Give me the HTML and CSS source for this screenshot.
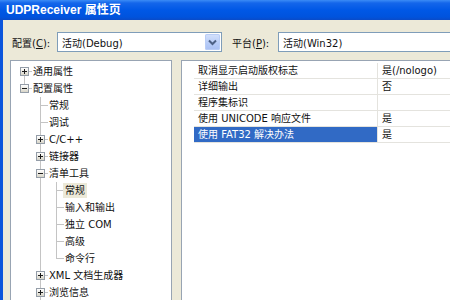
FILE: index.html
```html
<!DOCTYPE html>
<html lang="zh-CN">
<head>
    <meta charset="UTF-8">
    <title>UDPReceiver 属性页</title>
    <link rel="stylesheet" href="styles.css">
</head>
<body>
    <div class="titlebar">UDPReceiver 属性页</div>
    <div class="frame">
        <div class="config">
            <span class="label">配置(<u>C</u>):</span>
            <div class="combo">
                <span class="value">活动(Debug)</span>
                <span class="drop">
                    <svg width="15" height="16" viewBox="0 0 15 16">
                        <path d="M4 6.5 L7.5 10 L11 6.5" fill="none" stroke="#4d6185" stroke-width="2"/>
                    </svg>
                </span>
            </div>
            <span class="label label-platform">平台(<u>P</u>):</span>
            <div class="combo combo-wide">
                <span class="value">活动(Win32)</span>
            </div>
        </div>

        <div class="panes">
            <div class="tree">
                <div class="trow"><span class="cell head"><i class="box plus"></i></span><span class="tlabel">通用属性</span></div>
                <div class="trow"><span class="cell end"><i class="box"></i></span><span class="tlabel">配置属性</span></div>
                <div class="trow"><span class="cell"></span><span class="cell tee"></span><span class="tlabel">常规</span></div>
                <div class="trow"><span class="cell"></span><span class="cell tee"></span><span class="tlabel">调试</span></div>
                <div class="trow"><span class="cell"></span><span class="cell tee"><i class="box plus"></i></span><span class="tlabel">C/C++</span></div>
                <div class="trow"><span class="cell"></span><span class="cell tee"><i class="box plus"></i></span><span class="tlabel">链接器</span></div>
                <div class="trow"><span class="cell"></span><span class="cell tee"><i class="box"></i></span><span class="tlabel">清单工具</span></div>
                <div class="trow"><span class="cell"></span><span class="cell pass"></span><span class="cell tee"></span><span class="tlabel selected">常规</span></div>
                <div class="trow"><span class="cell"></span><span class="cell pass"></span><span class="cell tee"></span><span class="tlabel">输入和输出</span></div>
                <div class="trow"><span class="cell"></span><span class="cell pass"></span><span class="cell tee"></span><span class="tlabel">独立 COM</span></div>
                <div class="trow"><span class="cell"></span><span class="cell pass"></span><span class="cell tee"></span><span class="tlabel">高级</span></div>
                <div class="trow"><span class="cell"></span><span class="cell pass"></span><span class="cell end"></span><span class="tlabel">命令行</span></div>
                <div class="trow"><span class="cell"></span><span class="cell tee"><i class="box plus"></i></span><span class="tlabel">XML 文档生成器</span></div>
                <div class="trow"><span class="cell"></span><span class="cell tee"><i class="box plus"></i></span><span class="tlabel">浏览信息</span></div>
            </div>

            <div class="grid">
                <div class="gutter"></div>
                <div class="rows">
                    <div class="prow"><span class="pname">取消显示启动版权标志</span><span class="pvalue">是(/nologo)</span></div>
                    <div class="prow"><span class="pname">详细输出</span><span class="pvalue">否</span></div>
                    <div class="prow"><span class="pname">程序集标识</span><span class="pvalue"></span></div>
                    <div class="prow"><span class="pname">使用 UNICODE 响应文件</span><span class="pvalue">是</span></div>
                    <div class="prow selected"><span class="pname">使用 FAT32 解决办法</span><span class="pvalue">是</span></div>
                </div>
            </div>
        </div>
    </div>
</body>
</html>
```

FILE: styles.css
```css
body {
    margin: 0;
    width: 450px;
    height: 300px;
    overflow: hidden;
    background: #ece9d8;
    color: #111;
    font: 10px "DejaVu Sans", "Noto Sans CJK SC", sans-serif;
}

.titlebar {
    height: 20px;
    padding-left: 6px;
    line-height: 21px;
    color: #fff;
    font: bold 12px "Liberation Sans", "Noto Sans CJK SC", sans-serif;
    background: linear-gradient(#3b8cf6 0, #1466ea 3px, #0058e6 50%, #0053dd 85%, #0a4bc8 100%);
}

.frame {
    height: 280px;
    box-sizing: border-box;
    padding: 12px 0 0 7px;
    border-left: 3px solid #0b55dc;
    overflow: hidden;
}

/* configuration / platform row */
.config {
    display: flex;
    align-items: center;
    height: 20px;
}

.label {
    width: 47px;
    padding-left: 2px;
    box-sizing: border-box;
    flex: none;
}

.label-platform {
    width: 46px;
    margin-left: 10px;
    padding-left: 0;
}

.combo {
    width: 165px;
    height: 20px;
    flex: none;
    box-sizing: border-box;
    display: flex;
    align-items: center;
    background: #fff;
    border: 1px solid #7f9db9;
}

.combo-wide {
    width: 220px;
}

.combo .value {
    flex: 1;
    padding-left: 4px;
}

.combo .drop {
    width: 15px;
    height: 16px;
    margin-right: 1px;
    display: flex;
    border-radius: 2px;
    background: linear-gradient(#d6e2fc, #b6cbf7 60%, #a9c0f3);
    box-shadow: inset 0 0 0 1px #b9cdf6;
}

/* two panes */
.panes {
    display: flex;
    gap: 9px;
    margin-top: 8px;
}

.tree {
    width: 162px;
    height: 260px;
    flex: none;
    box-sizing: border-box;
    padding: 2px 0 0 5px;
    background: #fff;
    border: 1px solid #98a4b3;
}

.trow {
    display: flex;
    height: 17px;
    align-items: center;
}

.cell {
    width: 16px;
    height: 17px;
    flex: none;
    box-sizing: border-box;
    padding: 4px 0 0 4px;
    background-repeat: no-repeat;
}

.cell.pass {
    background-image: linear-gradient(#c4c4c4, #c4c4c4);
    background-position: 8px 0;
    background-size: 1px 17px;
}

.cell.tee {
    background-image: linear-gradient(#c4c4c4, #c4c4c4), linear-gradient(#c4c4c4, #c4c4c4);
    background-position: 8px 0, 8px 8px;
    background-size: 1px 17px, 8px 1px;
}

.cell.end {
    background-image: linear-gradient(#c4c4c4, #c4c4c4), linear-gradient(#c4c4c4, #c4c4c4);
    background-position: 8px 0, 8px 8px;
    background-size: 1px 9px, 8px 1px;
}

.cell.head {
    background-image: linear-gradient(#c4c4c4, #c4c4c4), linear-gradient(#c4c4c4, #c4c4c4);
    background-position: 8px 8px, 8px 8px;
    background-size: 1px 9px, 8px 1px;
}

.box {
    display: block;
    width: 9px;
    height: 9px;
    box-sizing: border-box;
    border: 1px solid #949da8;
    background:
        linear-gradient(#1c1c1c, #1c1c1c) 1px 3px / 5px 1px no-repeat,
        linear-gradient(#fff, #d8d5c8);
}

.box.plus {
    background:
        linear-gradient(#1c1c1c, #1c1c1c) 1px 3px / 5px 1px no-repeat,
        linear-gradient(#1c1c1c, #1c1c1c) 3px 1px / 1px 5px no-repeat,
        linear-gradient(#fff, #d8d5c8);
}

.tlabel {
    margin-left: -1px;
    padding: 0 2px;
    line-height: 15px;
    white-space: nowrap;
}

.tlabel.selected {
    background: #ece9d8;
}

/* property grid */
.grid {
    width: 300px;
    height: 260px;
    flex: none;
    display: flex;
    box-sizing: border-box;
    background: #fff;
    border: 1px solid #98a4b3;
}

.gutter {
    width: 12px;
    flex: none;
}

.rows {
    flex: 1;
    padding-top: 2px;
}

.prow {
    display: flex;
    height: 16px;
    box-sizing: border-box;
    line-height: 15px;
    border-bottom: 1px solid #e4e3de;
}

.pname {
    width: 184px;
    flex: none;
    box-sizing: border-box;
    padding-left: 4px;
    border-right: 1px solid #e4e3de;
    white-space: nowrap;
}

.pvalue {
    flex: 1;
    padding-left: 4px;
}

.prow.selected .pname {
    background: #316ac5;
    color: #fff;
}
```
